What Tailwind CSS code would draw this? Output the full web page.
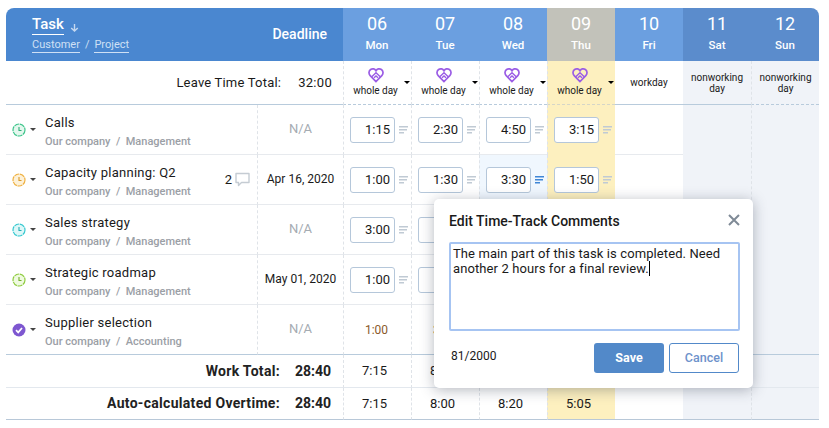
<!DOCTYPE html>
<html><head><meta charset="utf-8"><script src="https://cdn.jsdelivr.net/npm/@tailwindcss/browser@4"></script></head>
<body class="bg-white font-['Roboto',sans-serif] text-[#1a1a1a] overflow-hidden">
<svg width="0" height="0" class="absolute"><defs>
<symbol id="heart" viewBox="0 0 16 16"><path d="M8 14.6 2.2 8.6C.4 6.7.7 3.8 2.6 2.5 4.6 1.200 6.900 1.900 8 3.700 9.100 1.900 11.400 1.200 13.400 2.500 15.300 3.800 15.600 6.700 13.800 8.600Z" fill="none" stroke="#9b5de5" stroke-width="1.700"/><path d="M3.500 10 8 5.800 12.500 10M6 10.800 8 9 10 10.800" fill="none" stroke="#9b5de5" stroke-width="1.400"/></symbol>
<symbol id="lines" viewBox="0 0 9 8"><path d="M0 .75H9M0 3.750H8M0 6.750H5" fill="none" stroke="currentColor" stroke-width="1.500"/></symbol>
</defs></svg>
<main class="relative w-[829px] h-[428px] pt-2 pl-[6px]">
<div class="grid grid-cols-[251px_86px_repeat(7,68px)] grid-rows-[53px_44px_repeat(5,50px)_33px_32px] w-[813px] text-[13px]">

<!-- header -->
<div class="bg-[#4a87d0] rounded-tl-lg pl-[26px] pt-[7px] text-white">
  <div class="flex items-center gap-[6px]"><span class="text-[15px] leading-[19px] border-b border-white font-medium">Task</span><svg width="9" height="9" viewBox="0 0 9 9" class="mt-1"><path d="M4.500 1V8M1.200 5 4.500 8 7.800 5" fill="none" stroke="#c5d8f0" stroke-width="1.400"/></svg></div>
  <div class="flex gap-[5px] text-[11px] leading-[15px] mt-[2px] text-[#cfe0f5]"><span class="border-b border-[#cfe0f5]">Customer</span><span>/</span><span class="border-b border-[#cfe0f5]">Project</span></div>
</div>
<div class="bg-[#4a87d0] flex items-center justify-end pr-[16px] text-white text-[14px] font-medium pb-[1px]">Deadline</div>
<div class="bg-[#6b9fe0] text-white flex flex-col items-center pt-[4px]"><span class="text-[18px] leading-[24px]">06</span><span class="text-[11.500px] leading-[14px] mt-[2px] font-medium">Mon</span></div>
<div class="bg-[#6b9fe0] text-white flex flex-col items-center pt-[4px]"><span class="text-[18px] leading-[24px]">07</span><span class="text-[11.500px] leading-[14px] mt-[2px] font-medium">Tue</span></div>
<div class="bg-[#6b9fe0] text-white flex flex-col items-center pt-[4px]"><span class="text-[18px] leading-[24px]">08</span><span class="text-[11.500px] leading-[14px] mt-[2px] font-medium">Wed</span></div>
<div class="bg-[#c2c2ba] text-white flex flex-col items-center pt-[4px]"><span class="text-[18px] leading-[24px]">09</span><span class="text-[11.500px] leading-[14px] mt-[2px] font-medium">Thu</span></div>
<div class="bg-[#6b9fe0] text-white flex flex-col items-center pt-[4px]"><span class="text-[18px] leading-[24px]">10</span><span class="text-[11.500px] leading-[14px] mt-[2px] font-medium">Fri</span></div>
<div class="bg-[#5b8ccc] text-white flex flex-col items-center pt-[4px]"><span class="text-[18px] leading-[24px]">11</span><span class="text-[11.500px] leading-[14px] mt-[2px] font-medium">Sat</span></div>
<div class="bg-[#5b8ccc] text-white flex flex-col items-center pt-[4px] rounded-tr-lg"><span class="text-[18px] leading-[24px]">12</span><span class="text-[11.500px] leading-[14px] mt-[2px] font-medium">Sun</span></div>

<!-- leave row -->
<div class="col-span-2 border-b border-[#b8cbdc] flex items-center justify-end pr-[11px] gap-[17px] text-[13px] tracking-[.2px] pt-[1px]"><span>Leave Time Total:</span><span class="tracking-[.3px]">32:00</span></div>
<div class="relative border-l border-dashed border-[#dfe3e8] border-b-[#b8cbdc] border-b flex flex-col items-center pt-[6px] pr-[4px]"><svg width="16" height="16"><use href="#heart"/></svg><span class="text-[10px] leading-[12px] mt-[2px]">whole day</span><i class="absolute right-[1px] top-[20px] border-x-[3px] border-t-[3px] border-x-transparent border-t-black"></i></div>
<div class="relative border-l border-dashed border-[#dfe3e8] border-b-[#b8cbdc] border-b flex flex-col items-center pt-[6px] pr-[4px]"><svg width="16" height="16"><use href="#heart"/></svg><span class="text-[10px] leading-[12px] mt-[2px]">whole day</span><i class="absolute right-[1px] top-[20px] border-x-[3px] border-t-[3px] border-x-transparent border-t-black"></i></div>
<div class="relative border-l border-dashed border-[#dfe3e8] border-b-[#b8cbdc] border-b flex flex-col items-center pt-[6px] pr-[4px]"><svg width="16" height="16"><use href="#heart"/></svg><span class="text-[10px] leading-[12px] mt-[2px]">whole day</span><i class="absolute right-[1px] top-[20px] border-x-[3px] border-t-[3px] border-x-transparent border-t-black"></i></div>
<div class="relative bg-[#fdf0bf] border-l border-dashed border-[#dfe3e8] border-b-[#d5d6c8] border-b flex flex-col items-center pt-[6px] pr-[4px]"><svg width="16" height="16"><use href="#heart"/></svg><span class="text-[10px] leading-[12px] mt-[2px]">whole day</span><i class="absolute right-[1px] top-[20px] border-x-[3px] border-t-[3px] border-x-transparent border-t-black"></i></div>
<div class="border-b border-[#b8cbdc] flex items-center justify-center text-[10px] leading-[11px]">workday</div>
<div class="bg-[#f0f3f8] border-b border-[#b8cbdc] flex items-center justify-center text-center text-[10px] leading-[11px]">nonworking<br>day</div>
<div class="bg-[#f0f3f8] border-l border-dashed border-[#dfe3e8] border-b-[#b8cbdc] border-b flex items-center justify-center text-center text-[10px] leading-[11px]">nonworking<br>day</div>

<!-- row 1 -->
<div class="border-b border-[#e7eaee] flex items-center pl-[6px]">
  <svg width="14" height="14" viewBox="0 0 14 14"><circle cx="7" cy="7" r="6" fill="#e4f7ee" stroke="#3cc48a" stroke-width="1.200" stroke-dasharray="5 .7"/><path d="M7 4V7.500H9.500" fill="none" stroke="#2fae78" stroke-width="1.100"/></svg>
  <i class="ml-[4px] border-x-[3px] border-t-[3px] border-x-transparent border-t-[#444]"></i>
  <div class="ml-[9px] pt-[3px]"><div class="text-[13px] tracking-[.25px] leading-[18px]">Calls</div><div class="text-[11px] leading-[15px] mt-[2px] text-[#9ba0a6] font-medium whitespace-pre">Our company  /  Management</div></div>
</div>
<div class="border-b border-l border-[#e7eaee] border-l-[#dfe3e8] border-dashed [border-bottom-style:solid] flex items-center justify-center text-[#a5abb2] pb-[1px]">N/A</div>
<div class="border-b border-l border-[#e7eaee] border-l-[#dfe3e8] border-dashed [border-bottom-style:solid] flex items-center gap-1 pl-[6px]"><div class="w-[45px] h-[26px] border border-[#b5c7da] rounded-[3px] bg-white text-right pr-[4px] text-[13px] leading-[24px]">1:15</div><svg width="9" height="8" class="text-[#c0cad4]"><use href="#lines"/></svg></div>
<div class="border-b border-l border-[#e7eaee] border-l-[#dfe3e8] border-dashed [border-bottom-style:solid] flex items-center gap-1 pl-[6px]"><div class="w-[45px] h-[26px] border border-[#b5c7da] rounded-[3px] bg-white text-right pr-[4px] text-[13px] leading-[24px]">2:30</div><svg width="9" height="8" class="text-[#c0cad4]"><use href="#lines"/></svg></div>
<div class="border-b border-l border-[#e7eaee] border-l-[#dfe3e8] border-dashed [border-bottom-style:solid] flex items-center gap-1 pl-[6px]"><div class="w-[45px] h-[26px] border border-[#b5c7da] rounded-[3px] bg-white text-right pr-[4px] text-[13px] leading-[24px]">4:50</div><svg width="9" height="8" class="text-[#c0cad4]"><use href="#lines"/></svg></div>
<div class="bg-[#fdf0bf] border-l border-dashed border-l-[#dfe3e8] flex items-center gap-1 pl-[6px]"><div class="w-[45px] h-[26px] border border-[#b5c7da] rounded-[3px] bg-white text-right pr-[4px] text-[13px] leading-[24px]">3:15</div><svg width="9" height="8" class="text-[#c0cad4]"><use href="#lines"/></svg></div>
<div class="border-b border-[#e7eaee]"></div>
<div class="bg-[#f0f3f8]"></div>
<div class="bg-[#f0f3f8] border-l border-dashed border-[#dfe3e8]"></div>

<!-- row 2 -->
<div class="border-b border-[#e7eaee] flex items-center pl-[6px]">
  <svg width="14" height="14" viewBox="0 0 14 14"><circle cx="7" cy="7" r="6" fill="#fdf1d8" stroke="#efb040" stroke-width="1.200" stroke-dasharray="5 .7"/><path d="M7 4V7.500H9.500" fill="none" stroke="#d99a28" stroke-width="1.100"/></svg>
  <i class="ml-[4px] border-x-[3px] border-t-[3px] border-x-transparent border-t-[#444]"></i>
  <div class="ml-[9px] pt-[3px] flex-1"><div class="text-[13px] tracking-[.25px] leading-[18px]">Capacity planning: Q2</div><div class="text-[11px] leading-[15px] mt-[2px] text-[#9ba0a6] font-medium whitespace-pre">Our company  /  Management</div></div>
  <div class="flex items-center gap-[3px] pr-[7px] text-[13px]">2<svg width="15" height="15" viewBox="0 0 15 15"><path d="M1 1.500H14V10.500H6.500L3.500 13.500V10.500H1Z" fill="none" stroke="#c5ccd3" stroke-width="1.400" stroke-linejoin="round"/></svg></div>
</div>
<div class="border-b border-l border-[#e7eaee] border-l-[#dfe3e8] border-dashed [border-bottom-style:solid] flex items-center justify-center text-[12px] pb-[1px]">Apr 16, 2020</div>
<div class="border-b border-l border-[#e7eaee] border-l-[#dfe3e8] border-dashed [border-bottom-style:solid] flex items-center gap-1 pl-[6px]"><div class="w-[45px] h-[26px] border border-[#b5c7da] rounded-[3px] bg-white text-right pr-[4px] text-[13px] leading-[24px]">1:00</div><svg width="9" height="8" class="text-[#c0cad4]"><use href="#lines"/></svg></div>
<div class="border-b border-l border-[#e7eaee] border-l-[#dfe3e8] border-dashed [border-bottom-style:solid] flex items-center gap-1 pl-[6px]"><div class="w-[45px] h-[26px] border border-[#b5c7da] rounded-[3px] bg-white text-right pr-[4px] text-[13px] leading-[24px]">1:30</div><svg width="9" height="8" class="text-[#c0cad4]"><use href="#lines"/></svg></div>
<div class="bg-[#f0f7fe] border-b border-l border-[#e7eaee] border-l-[#dfe3e8] border-dashed [border-bottom-style:solid] flex items-center gap-1 pl-[6px]"><div class="w-[45px] h-[26px] border border-[#b5c7da] rounded-[3px] bg-white text-right pr-[4px] text-[13px] leading-[24px]">3:30</div><svg width="9" height="8" class="text-[#3f86d6]"><use href="#lines"/></svg></div>
<div class="bg-[#fdf0bf] border-l border-dashed border-l-[#dfe3e8] flex items-center gap-1 pl-[6px]"><div class="w-[45px] h-[26px] border border-[#b5c7da] rounded-[3px] bg-white text-right pr-[4px] text-[13px] leading-[24px]">1:50</div><svg width="9" height="8" class="text-[#c0cad4]"><use href="#lines"/></svg></div>
<div class="border-b border-[#e7eaee]"></div>
<div class="bg-[#f0f3f8]"></div>
<div class="bg-[#f0f3f8] border-l border-dashed border-[#dfe3e8]"></div>

<!-- row 3 -->
<div class="border-b border-[#e7eaee] flex items-center pl-[6px]">
  <svg width="14" height="14" viewBox="0 0 14 14"><circle cx="7" cy="7" r="6" fill="#def7f8" stroke="#35c8cf" stroke-width="1.200" stroke-dasharray="5 .7"/><path d="M7 4V7.500H9.500" fill="none" stroke="#25aeb5" stroke-width="1.100"/></svg>
  <i class="ml-[4px] border-x-[3px] border-t-[3px] border-x-transparent border-t-[#444]"></i>
  <div class="ml-[9px] pt-[3px]"><div class="text-[13px] tracking-[.25px] leading-[18px]">Sales strategy</div><div class="text-[11px] leading-[15px] mt-[2px] text-[#9ba0a6] font-medium whitespace-pre">Our company  /  Management</div></div>
</div>
<div class="border-b border-l border-[#e7eaee] border-l-[#dfe3e8] border-dashed [border-bottom-style:solid] flex items-center justify-center text-[#a5abb2] pb-[1px]">N/A</div>
<div class="border-b border-l border-[#e7eaee] border-l-[#dfe3e8] border-dashed [border-bottom-style:solid] flex items-center gap-1 pl-[6px]"><div class="w-[45px] h-[26px] border border-[#b5c7da] rounded-[3px] bg-white text-right pr-[4px] text-[13px] leading-[24px]">3:00</div><svg width="9" height="8" class="text-[#c0cad4]"><use href="#lines"/></svg></div>
<div class="border-b border-l border-[#e7eaee] border-l-[#dfe3e8] border-dashed [border-bottom-style:solid] flex items-center gap-1 pl-[6px]"><div class="w-[45px] h-[26px] border border-[#b5c7da] rounded-[3px] bg-white"></div></div>
<div class="border-b border-l border-[#e7eaee] border-l-[#dfe3e8] border-dashed [border-bottom-style:solid]"></div>
<div class="bg-[#fdf0bf] border-l border-dashed border-l-[#dfe3e8]"></div>
<div class="border-b border-[#e7eaee]"></div>
<div class="bg-[#f0f3f8]"></div>
<div class="bg-[#f0f3f8] border-l border-dashed border-[#dfe3e8]"></div>

<!-- row 4 -->
<div class="border-b border-[#e7eaee] flex items-center pl-[6px]">
  <svg width="14" height="14" viewBox="0 0 14 14"><circle cx="7" cy="7" r="6" fill="#effae0" stroke="#8ecb3f" stroke-width="1.200" stroke-dasharray="5 .7"/><path d="M7 4V7.500H9.500" fill="none" stroke="#73b02a" stroke-width="1.100"/></svg>
  <i class="ml-[4px] border-x-[3px] border-t-[3px] border-x-transparent border-t-[#444]"></i>
  <div class="ml-[9px] pt-[3px]"><div class="text-[13px] tracking-[.25px] leading-[18px]">Strategic roadmap</div><div class="text-[11px] leading-[15px] mt-[2px] text-[#9ba0a6] font-medium whitespace-pre">Our company  /  Management</div></div>
</div>
<div class="border-b border-l border-[#e7eaee] border-l-[#dfe3e8] border-dashed [border-bottom-style:solid] flex items-center justify-center text-[12px] pb-[1px]">May 01, 2020</div>
<div class="border-b border-l border-[#e7eaee] border-l-[#dfe3e8] border-dashed [border-bottom-style:solid] flex items-center gap-1 pl-[6px]"><div class="w-[45px] h-[26px] border border-[#b5c7da] rounded-[3px] bg-white text-right pr-[4px] text-[13px] leading-[24px]">1:00</div><svg width="9" height="8" class="text-[#c0cad4]"><use href="#lines"/></svg></div>
<div class="border-b border-l border-[#e7eaee] border-l-[#dfe3e8] border-dashed [border-bottom-style:solid] flex items-center gap-1 pl-[6px]"><div class="w-[45px] h-[26px] border border-[#b5c7da] rounded-[3px] bg-white"></div></div>
<div class="border-b border-l border-[#e7eaee] border-l-[#dfe3e8] border-dashed [border-bottom-style:solid]"></div>
<div class="bg-[#fdf0bf] border-l border-dashed border-l-[#dfe3e8]"></div>
<div class="border-b border-[#e7eaee]"></div>
<div class="bg-[#f0f3f8]"></div>
<div class="bg-[#f0f3f8] border-l border-dashed border-[#dfe3e8]"></div>

<!-- row 5 -->
<div class="border-b border-[#b8cbdc] flex items-center pl-[6px]">
  <svg width="14" height="14" viewBox="0 0 14 14"><circle cx="7" cy="7" r="6.500" fill="#7e57d0"/><path d="M4 7.200 6.200 9.400 10 5" fill="none" stroke="#fff" stroke-width="1.700"/></svg>
  <i class="ml-[4px] border-x-[3px] border-t-[3px] border-x-transparent border-t-[#444]"></i>
  <div class="ml-[9px] pt-[3px]"><div class="text-[13px] tracking-[.25px] leading-[18px]">Supplier selection</div><div class="text-[11px] leading-[15px] mt-[2px] text-[#9ba0a6] font-medium whitespace-pre">Our company  /  Accounting</div></div>
</div>
<div class="border-b border-l border-[#b8cbdc] border-l-[#dfe3e8] border-dashed [border-bottom-style:solid] flex items-center justify-center text-[#a5abb2] pb-[1px]">N/A</div>
<div class="border-b border-l border-[#b8cbdc] border-l-[#dfe3e8] border-dashed [border-bottom-style:solid] flex items-center justify-center text-[#8a5a2a] text-[12px] pr-[2px]">1:00</div>
<div class="border-b border-l border-[#b8cbdc] border-l-[#dfe3e8] border-dashed [border-bottom-style:solid] flex items-center justify-center text-[#8a5a2a] text-[12px] pr-[2px]">3:00</div>
<div class="border-b border-l border-[#b8cbdc] border-l-[#dfe3e8] border-dashed [border-bottom-style:solid]"></div>
<div class="bg-[#fdf0bf] border-l border-dashed border-l-[#dfe3e8]"></div>
<div class="border-b border-[#b8cbdc]"></div>
<div class="bg-[#f0f3f8] border-b border-[#b8cbdc]"></div>
<div class="bg-[#f0f3f8] border-b border-l border-[#b8cbdc] border-l-[#dfe3e8] border-dashed [border-bottom-style:solid]"></div>

<!-- work total -->
<div class="col-span-2 border-b border-[#e3e8ee] flex items-center justify-end pr-[12px] gap-[15px] text-[14px] font-bold text-[#222]"><span class="tracking-[.3px]">Work Total:</span><span>28:40</span></div>
<div class="border-b border-l border-[#e3e8ee] border-l-[#dfe3e8] border-dashed [border-bottom-style:solid] flex items-center justify-center text-[13px] pr-[6px]">7:15</div>
<div class="border-b border-l border-[#e3e8ee] border-l-[#dfe3e8] border-dashed [border-bottom-style:solid] flex items-center justify-center text-[13px] pr-[6px]">8:00</div>
<div class="border-b border-l border-[#e3e8ee] border-l-[#dfe3e8] border-dashed [border-bottom-style:solid] flex items-center justify-center text-[13px] pr-[6px]">8:20</div>
<div class="bg-[#fdf0bf] border-l border-dashed border-l-[#dfe3e8] flex items-center justify-center text-[13px] pr-[6px]">5:05</div>
<div class="border-b border-[#e3e8ee]"></div>
<div class="bg-[#f0f3f8] border-b border-[#e3e8ee]"></div>
<div class="bg-[#f0f3f8] border-b border-l border-[#e3e8ee] border-l-[#dfe3e8] border-dashed [border-bottom-style:solid]"></div>

<!-- overtime -->
<div class="col-span-2 border-b border-[#b8c8d8] flex items-center justify-end pr-[12px] gap-[15px] text-[14px] font-bold text-[#222]"><span class="tracking-[.3px]">Auto-calculated Overtime:</span><span>28:40</span></div>
<div class="border-b border-l border-[#b8c8d8] border-l-[#dfe3e8] border-dashed [border-bottom-style:solid] flex items-center justify-center text-[13px] pr-[6px]">7:15</div>
<div class="border-b border-l border-[#b8c8d8] border-l-[#dfe3e8] border-dashed [border-bottom-style:solid] flex items-center justify-center text-[13px] pr-[6px]">8:00</div>
<div class="border-b border-l border-[#b8c8d8] border-l-[#dfe3e8] border-dashed [border-bottom-style:solid] flex items-center justify-center text-[13px] pr-[6px]">8:20</div>
<div class="bg-[#fdf0bf] border-b border-l border-[#b8c8d8] border-l-[#dfe3e8] border-dashed [border-bottom-style:solid] flex items-center justify-center text-[13px] pr-[6px]">5:05</div>
<div class="border-b border-[#b8c8d8]"></div>
<div class="bg-[#f0f3f8] border-b border-[#b8c8d8]"></div>
<div class="bg-[#f0f3f8] border-b border-l border-[#b8c8d8] border-l-[#dfe3e8] border-dashed [border-bottom-style:solid]"></div>
</div>

<!-- popup -->
<div class="absolute left-[434px] top-[199px] w-[319px] h-[189px] bg-white rounded-[5px] shadow-[0_2px_14px_rgba(40,50,70,0.35)] px-[15px]">
  <div class="flex justify-between items-center h-[43px] pt-[1px] w-[291px]"><h2 class="text-[14px] font-medium text-[#1a1a1a]">Edit Time-Track Comments</h2><svg width="12" height="12" viewBox="0 0 12 12" class="mb-[2px]"><path d="M1 1 11 11M11 1 1 11" stroke="#7f8a96" stroke-width="2"/></svg></div>
  <div class="w-[291px] h-[89px] border-2 border-[#a6c4f2] rounded-[2px] px-[2px] pt-[2px] text-[13px] tracking-[.1px] leading-[15px] whitespace-nowrap">The main part of this task is completed. Need<br>another 2 hours for a final review.<span class="inline-block w-px h-[15px] bg-black align-top"></span></div>
  <div class="flex items-center justify-between mt-[12px] w-[290px]">
    <span class="text-[12px] pl-[2px] pb-[4px]">81/2000</span>
    <div class="flex gap-[5px]"><button class="w-[70px] h-[30px] rounded-[3px] bg-[#5289c9] text-white text-[12.500px] font-bold">Save</button><button class="w-[70px] h-[30px] rounded-[3px] border border-[#5289c9] bg-white text-[#6e92cb] text-[12.500px] font-medium">Cancel</button></div>
  </div>
</div>
</main>
</body></html>
